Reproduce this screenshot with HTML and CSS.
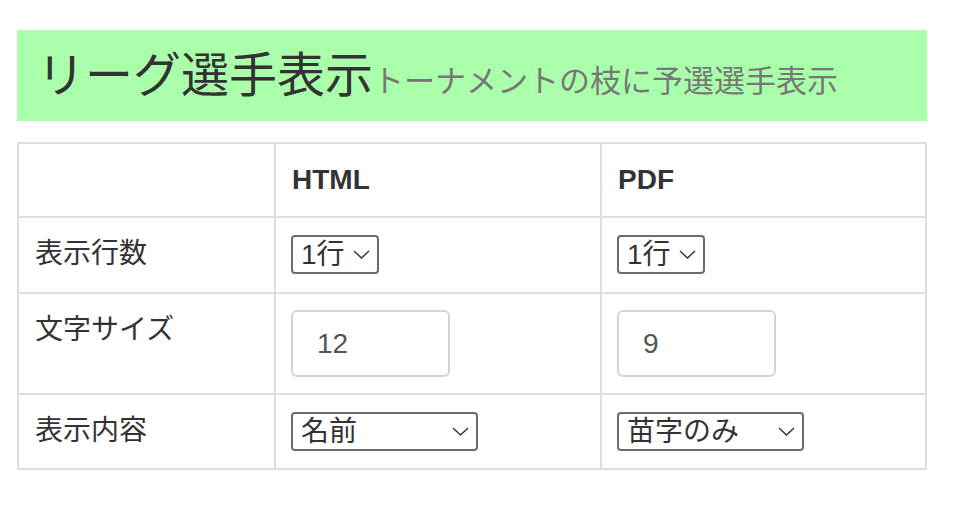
FILE: index.html
```html
<!DOCTYPE html>
<html lang="ja">
<head>
  <meta charset="UTF-8">
  <title>リーグ選手表示</title>
  <link rel="stylesheet" href="styles.css">
</head>
<body>
  <div class="page">
    <h1 class="heading">リーグ選手表示<small>トーナメントの枝に予選選手表示</small></h1>

    <table class="settings">
      <colgroup>
        <col class="c-label">
        <col class="c-html">
        <col class="c-pdf">
      </colgroup>
      <tr class="row-head">
        <th></th>
        <th>HTML</th>
        <th>PDF</th>
      </tr>
      <tr class="row-lines">
        <td>表示行数</td>
        <td>
          <select class="sel sel-rows">
            <option>1行</option>
            <option>2行</option>
          </select>
        </td>
        <td>
          <select class="sel sel-rows">
            <option>1行</option>
            <option>2行</option>
          </select>
        </td>
      </tr>
      <tr class="row-size">
        <td>文字サイズ</td>
        <td><input class="num" type="text" value="12"></td>
        <td><input class="num" type="text" value="9"></td>
      </tr>
      <tr class="row-content">
        <td>表示内容</td>
        <td>
          <select class="sel sel-name">
            <option>名前</option>
            <option>苗字のみ</option>
          </select>
        </td>
        <td>
          <select class="sel sel-name">
            <option>苗字のみ</option>
            <option>名前</option>
          </select>
        </td>
      </tr>
    </table>
  </div>
</body>
</html>
```

FILE: styles.css
```css
body {
  margin:0;
  font-family:"Liberation Sans", "Noto Sans CJK JP", sans-serif;
  color:#333;
  background:#fff;
}
.page { width:910px; padding:30px 0 0 17px; }

.heading {
  margin:0; height:91px; padding:0 0 0 20px;
  background:#aaffaa;
  display:flex; align-items:baseline;
  font-size:48px; font-weight:normal; line-height:91px;
}
.heading small { font-size:31px; color:#777; }

.settings {
  margin-top:21px; width:910px;
  border-collapse:collapse; table-layout:fixed;
}
.c-label { width:257px; }
.c-html { width:326px; }
.settings th, .settings td {
  border:2px solid #ddd;
  padding:16px 16px;
  text-align:left; vertical-align:top;
  font-size:28px; line-height:39px;
}
.settings th { font-weight:bold; }
.row-head { height:74px; }
.row-lines { height:76px; }
.row-size { height:101px; }
.row-content { height:75px; }

.sel {
  -webkit-appearance:none; appearance:none;
  display:block; box-sizing:border-box; height:39px;
  margin:1px 0 0 -1px;
  padding:0 30px 0 8px;
  font:28px "Liberation Sans", "Noto Sans CJK JP", sans-serif;
  color:#333;
  border:2px solid #6b6b6b; border-radius:4px;
  background:#fff url("data:image/svg+xml;utf8,<svg xmlns='http://www.w3.org/2000/svg' width='17' height='9' viewBox='0 0 17 9'><path d='M1 1l7.5 7 7.5-7' fill='none' stroke='%23333' stroke-width='1.4'/></svg>") no-repeat right 7px center;
  background-size:17px 9px;
}
.sel-rows { width:88px; }
.sel-name { width:187px; }

.num {
  display:block; box-sizing:border-box;
  width:159px; height:67px; margin:0 0 0 -1px;
  padding:0 24px;
  font:28px "Liberation Sans", sans-serif; color:#555;
  border:2px solid #d4d4d4; border-radius:6px;
  outline:none;
}
```
